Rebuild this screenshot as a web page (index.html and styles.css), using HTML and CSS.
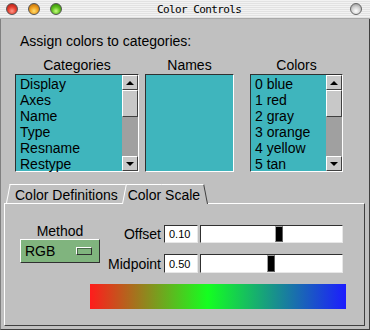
FILE: index.html
```html
<!DOCTYPE html>
<html lang="en">
<head>
  <meta charset="UTF-8">
  <title>Color Controls</title>
  <link rel="stylesheet" href="styles.css">
</head>
<body>
  <div class="window">
    <header class="titlebar">
      <div class="lights">
        <span class="light red"></span>
        <span class="light amber"></span>
        <span class="light green"></span>
      </div>
      <div class="title">Color Controls</div>
      <span class="light zoom"></span>
    </header>

    <main class="content">
      <p class="prompt">Assign colors to categories:</p>

      <div class="lists">
        <div class="list-col col-cat">
          <div class="list-label">Categories</div>
          <div class="listbox">
            <ul class="items">
              <li>Display</li>
              <li>Axes</li>
              <li>Name</li>
              <li>Type</li>
              <li>Resname</li>
              <li>Restype</li>
            </ul>
            <div class="scrollbar">
              <span class="sb-btn up"></span>
              <span class="sb-thumb"></span>
              <span class="sb-trough"></span>
              <span class="sb-btn down"></span>
            </div>
          </div>
        </div>

        <div class="list-col col-names">
          <div class="list-label">Names</div>
          <div class="listbox">
            <ul class="items"></ul>
          </div>
        </div>

        <div class="list-col col-colors">
          <div class="list-label">Colors</div>
          <div class="listbox">
            <ul class="items">
              <li>0 blue</li>
              <li>1 red</li>
              <li>2 gray</li>
              <li>3 orange</li>
              <li>4 yellow</li>
              <li>5 tan</li>
            </ul>
            <div class="scrollbar">
              <span class="sb-btn up"></span>
              <span class="sb-thumb"></span>
              <span class="sb-trough"></span>
              <span class="sb-btn down"></span>
            </div>
          </div>
        </div>
      </div>

      <div class="tabs">
        <div class="tab">Color Definitions</div>
        <div class="tab active">Color Scale</div>
      </div>

      <div class="pane">
        <div class="controls">
          <div class="method">
            <div class="method-label">Method</div>
            <div class="menu-btn">
              <span>RGB</span>
              <span class="menu-mark"></span>
            </div>
          </div>

          <div class="sliders">
            <label class="field-label">Offset</label>
            <div class="value">0.10</div>
            <div class="slider"><span class="handle" style="left: 74px;"></span></div>

            <label class="field-label">Midpoint</label>
            <div class="value">0.50</div>
            <div class="slider"><span class="handle" style="left: 66px;"></span></div>
          </div>
        </div>

        <div class="scale"></div>
      </div>
    </main>
  </div>
</body>
</html>
```

FILE: styles.css
```css
body {
  margin: 0;
  font-family: "Liberation Sans", Arial, sans-serif;
  font-size: 14px;
  color: #000;
  background-color: #c0c0c0;
}

.window {
  width: 370px;
  height: 330px;
  display: flex;
  flex-direction: column;
  overflow: hidden;
}

/* title bar */
.titlebar {
  height: 19px;
  box-sizing: border-box;
  display: flex;
  align-items: center;
  border-bottom: 1px solid #a8a8a8;
  background: repeating-linear-gradient(to bottom, #f2f2f2 0, #f2f2f2 1px, #e2e2e2 1px, #e2e2e2 2px);
}

.lights {
  display: flex;
  gap: 10px;
  padding-left: 6px;
}

.light {
  width: 12px;
  height: 12px;
  border-radius: 50%;
  box-sizing: border-box;
  border: 1px solid #555;
}

.light.red {
  background: radial-gradient(circle at 50% 70%, #ff9a8a 0, #e84030 45%, #a01810 100%);
}

.light.amber {
  background: radial-gradient(circle at 50% 70%, #ffe070 0, #f0a020 45%, #b06000 100%);
}

.light.green {
  background: radial-gradient(circle at 50% 70%, #c8ff80 0, #60c020 45%, #2a7a00 100%);
}

.light.zoom {
  margin-left: auto;
  margin-right: 8px;
  border-color: #666;
  background: radial-gradient(circle at 50% 70%, #ffffff 0, #d0d0d0 50%, #8a8a8a 100%);
}

.title {
  margin-left: 95px;
  font-family: "DejaVu Sans Mono", monospace;
  font-size: 11px;
  letter-spacing: -0.6px;
}

/* main area */
.content {
  flex: 1;
  display: flex;
  flex-direction: column;
  border-left: 1px solid #808080;
  border-right: 1px solid #404040;
  border-bottom: 1px solid #404040;
}

.prompt {
  margin: 14px 0 0 19px;
  line-height: 16px;
}

.lists {
  display: flex;
  margin: 8px 0 0 14px;
}

.list-col {
  display: flex;
  flex-direction: column;
}

.col-cat { width: 124px; }
.col-names { width: 89px; margin-left: 6px; }
.col-colors { width: 93px; margin-left: 16px; }

.list-label {
  text-align: center;
  line-height: 16px;
  margin-bottom: 1px;
}

.listbox {
  height: 98px;
  box-sizing: border-box;
  display: flex;
  background-color: #3fb5bd;
  border: 1px solid;
  border-color: #303030 #ffffff #ffffff #303030;
}

.items {
  flex: 1;
  list-style: none;
  margin: 0;
  padding: 1px 0 0 4px;
}

.items li {
  line-height: 16px;
  white-space: nowrap;
}

.scrollbar {
  width: 16px;
  display: flex;
  flex-direction: column;
  background-color: #a0a0a0;
}

.sb-btn,
.sb-thumb {
  box-sizing: border-box;
  background-color: #c8c8c8;
  border: 1px solid;
  border-color: #ffffff #404040 #404040 #ffffff;
  display: flex;
  align-items: center;
  justify-content: center;
}

.sb-btn { height: 15px; }
.sb-thumb { height: 27px; }
.sb-trough { flex: 1; }

.sb-btn::before {
  content: "";
  border-left: 4px solid transparent;
  border-right: 4px solid transparent;
}

.sb-btn.up::before { border-bottom: 4px solid #000; }
.sb-btn.down::before { border-top: 4px solid #000; }

/* tabs */
.tabs {
  display: flex;
  align-items: flex-end;
  margin: 12px 0 0 5px;
  height: 19px;
}

.tab {
  position: relative;
  isolation: isolate;
  height: 19px;
  box-sizing: border-box;
  padding: 3px 5px 0 9px;
  line-height: 16px;
  white-space: nowrap;
}

.tab::before {
  content: "";
  position: absolute;
  left: 0;
  top: 0;
  bottom: 0;
  width: 100%;
  box-sizing: border-box;
  border-left: 1px solid #ffffff;
  border-top: 1px solid #ffffff;
  background-color: #c0c0c0;
  transform: skewX(-11deg);
  transform-origin: bottom left;
  z-index: -1;
}

.tabs .tab:first-child {
  z-index: 1;
}

.tab.active {
  z-index: 2;
  height: 20px;
  margin-bottom: -1px;
  padding: 3px 8px 1px 6px;
  margin-left: -1px;
}

.tab.active::before {
  width: 50%;
}

.tab.active::after {
  content: "";
  position: absolute;
  right: 0;
  top: 0;
  bottom: 0;
  width: 50%;
  box-sizing: border-box;
  border-right: 1px solid #404040;
  border-top: 1px solid #ffffff;
  background-color: #c0c0c0;
  transform: skewX(11deg);
  transform-origin: bottom right;
  z-index: -1;
}

/* tab pane */
.pane {
  flex: 1;
  margin: 0 4px 3px 3px;
  padding: 19px 0 0 15px;
  border: 1px solid;
  border-color: #ffffff #404040 #404040 #ffffff;
  display: flex;
  flex-direction: column;
}

.controls {
  display: flex;
  align-items: flex-start;
}

.method {
  width: 80px;
  display: flex;
  flex-direction: column;
}

.method-label {
  text-align: center;
  line-height: 16px;
}

.menu-btn {
  height: 24px;
  box-sizing: border-box;
  display: flex;
  align-items: center;
  justify-content: space-between;
  padding: 0 7px 0 4px;
  background-color: #80b47e;
  border: 1px solid;
  border-color: #ffffff #303030 #303030 #ffffff;
}

.menu-mark {
  width: 16px;
  height: 8px;
  box-sizing: border-box;
  border: 1px solid;
  border-color: #ffffff #303030 #303030 #ffffff;
  box-shadow: inset 1px 1px 0 #4a6a4a;
}

.sliders {
  display: grid;
  grid-template-columns: 55px 34px 143px;
  grid-template-rows: 18px 19px;
  column-gap: 2px;
  row-gap: 11px;
  margin: 2px 0 0 7px;
  align-items: center;
}

.field-label {
  text-align: right;
  margin-right: 1px;
}

.value,
.slider {
  height: 100%;
  box-sizing: border-box;
  background-color: #ffffff;
  border: 1px solid;
  border-color: #303030 #e8e8e8 #e8e8e8 #303030;
}

.value {
  display: flex;
  align-items: center;
  padding-left: 4px;
  font-size: 11px;
}

.slider {
  position: relative;
}

.handle {
  position: absolute;
  top: 0;
  bottom: 0;
  width: 8px;
  box-sizing: border-box;
  background-color: #000;
  border: 1px solid;
  border-color: #a0a0a0 #606060 #606060 #a0a0a0;
}

.scale {
  width: 256px;
  height: 25px;
  margin: 11px 0 0 70px;
  background: linear-gradient(to right, #ff1c1c 0%, #14ff20 46%, #1c1cff 100%);
}
```
